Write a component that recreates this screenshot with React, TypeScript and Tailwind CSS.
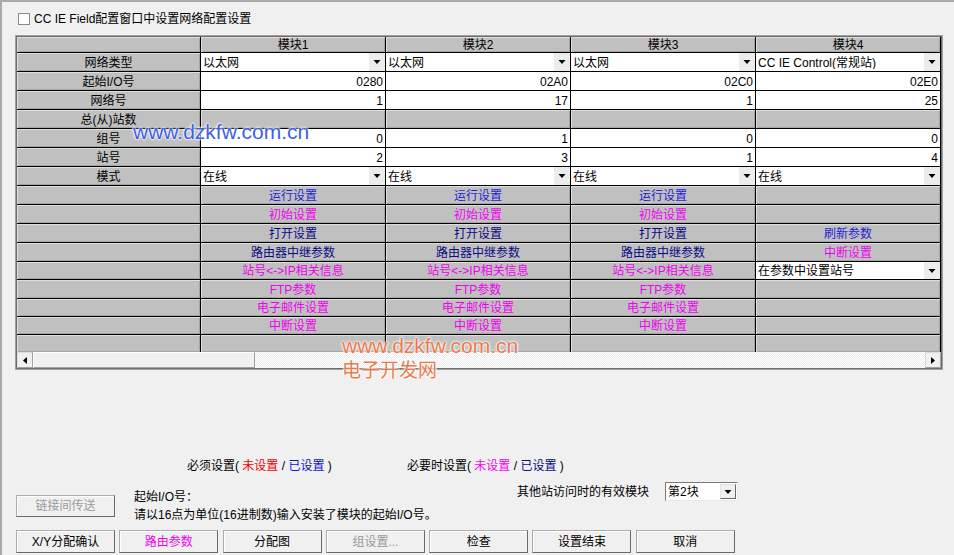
import React from 'react'

type Cell =
  | { t: 'gray'; text?: string; color?: string }
  | { t: 'num'; text: string }
  | { t: 'combo'; text: string }

type Row = { label: string; h: string; cells: Cell[]; last?: boolean }

const BLUE = 'text-[#1e1ed6]'
const NAVY = 'text-[#0a0a82]'
const PINK = 'text-[#f000f0]'

const g = (text?: string, color?: string): Cell => ({ t: 'gray', text, color })
const n = (text: string): Cell => ({ t: 'num', text })
const c = (text: string): Cell => ({ t: 'combo', text })

const rows: Row[] = [
  { label: '网络类型', h: 'h-[19px]', cells: [c('以太网'), c('以太网'), c('以太网'), c('CC IE Control(常规站)')] },
  { label: '起始I/O号', h: 'h-[19px]', cells: [n('0280'), n('02A0'), n('02C0'), n('02E0')] },
  { label: '网络号', h: 'h-[19px]', cells: [n('1'), n('17'), n('1'), n('25')] },
  { label: '总(从)站数', h: 'h-[19px]', cells: [g(), g(), g(), g()] },
  { label: '组号', h: 'h-[19px]', cells: [n('0'), n('1'), n('0'), n('0')] },
  { label: '站号', h: 'h-[19px]', cells: [n('2'), n('3'), n('1'), n('4')] },
  { label: '模式', h: 'h-[19px]', cells: [c('在线'), c('在线'), c('在线'), c('在线')] },
  { label: '', h: 'h-[19px]', cells: [g('运行设置', BLUE), g('运行设置', BLUE), g('运行设置', BLUE), g()] },
  { label: '', h: 'h-[19px]', cells: [g('初始设置', PINK), g('初始设置', PINK), g('初始设置', PINK), g()] },
  { label: '', h: 'h-[19px]', cells: [g('打开设置', NAVY), g('打开设置', NAVY), g('打开设置', NAVY), g('刷新参数', BLUE)] },
  { label: '', h: 'h-[19px]', cells: [g('路由器中继参数', NAVY), g('路由器中继参数', NAVY), g('路由器中继参数', NAVY), g('中断设置', PINK)] },
  { label: '', h: 'h-[18px]', cells: [g('站号<->IP相关信息', PINK), g('站号<->IP相关信息', PINK), g('站号<->IP相关信息', PINK), c('在参数中设置站号')] },
  { label: '', h: 'h-[19px]', cells: [g('FTP参数', PINK), g('FTP参数', PINK), g('FTP参数', PINK), g()] },
  { label: '', h: 'h-[18px]', cells: [g('电子邮件设置', PINK), g('电子邮件设置', PINK), g('电子邮件设置', PINK), g()] },
  { label: '', h: 'h-[18px]', cells: [g('中断设置', PINK), g('中断设置', PINK), g('中断设置', PINK), g()] },
  { label: '', h: 'h-[17px]', cells: [g(), g(), g(), g()], last: true },
]

const grayCell = 'bg-[#c0c0c0] shadow-[inset_1px_1px_0_#dedede,inset_-1px_-1px_0_#a4a4a4]'

function Arrow() {
  return (
    <svg width="8" height="4" viewBox="0 0 8 4">
      <path d="M0.5 0h7L4 4z" fill="#000" />
    </svg>
  )
}

function DataCell({ cell }: { cell: Cell }) {
  if (cell.t === 'num') {
    return <div className="h-full flex items-center justify-end pr-[2px] pt-px bg-white">{cell.text}</div>
  }
  if (cell.t === 'combo') {
    return (
      <div className="h-full flex items-center bg-white">
        <span className="flex-1 pl-[2px] pt-px truncate">{cell.text}</span>
        <span className="w-[16px] h-full flex items-center justify-center bg-[#ececec]">
          <Arrow />
        </span>
      </div>
    )
  }
  return (
    <div className={`h-full flex items-center justify-center pt-px ${grayCell} ${cell.color ?? ''}`}>
      {cell.text}
    </div>
  )
}

function Btn({ label, className = '' }: { label: string; className?: string }) {
  return (
    <div
      className={`w-[99px] h-[23px] flex items-center justify-center bg-[#f0f0f0] border border-[#adadad] border-r-[#6a6a6a] border-b-[#6a6a6a] shadow-[inset_1px_1px_0_#ffffff] ${className}`}
    >
      {label}
    </div>
  )
}

export default function App() {
  return (
    <div className="relative w-[954px] h-[555px] overflow-hidden bg-[#f0f0f0] border-t-2 border-l-2 border-[#a9a9a9] text-[12px] leading-none text-black font-['Liberation_Sans','Noto_Sans_CJK_SC',sans-serif]">
      {/* checkbox */}
      <div className="flex items-center h-[14px] mt-[10px] ml-[16px]">
        <span className="w-[12px] h-[12px] bg-white border border-[#8a8a8a]" />
        <span className="ml-[4px]">CC IE Field配置窗口中设置网络配置设置</span>
      </div>

      {/* table */}
      <div className="mt-[9px] ml-[13px] w-[928px] border border-[#a0a0a0]">
        <div className="border border-[#6e6e6e]">
          <div className="flex h-[16px] border-b border-black">
            <div className={`w-[184px] h-full border-r border-black ${grayCell}`} />
            {['模块1', '模块2', '模块3', '模块4'].map((m) => (
              <div key={m} className={`w-[185px] h-full border-r border-black flex items-center justify-center ${grayCell}`}>
                {m}
              </div>
            ))}
          </div>
          {rows.map((r, i) => (
            <div key={i} className={`flex ${r.h} ${r.last ? '' : 'border-b border-black'}`}>
              <div className={`w-[184px] h-full border-r border-black flex items-center justify-center pt-px ${grayCell}`}>
                {r.label}
              </div>
              {r.cells.map((cell, j) => (
                <div key={j} className="w-[185px] h-full border-r border-black">
                  <DataCell cell={cell} />
                </div>
              ))}
            </div>
          ))}
          {/* horizontal scrollbar */}
          <div className="flex h-[16px]">
            <div className="w-[16px] h-full flex items-center justify-center bg-[#f0f0f0] border border-[#dcdcdc] border-r-[#a0a0a0] border-b-[#a0a0a0]">
              <svg width="4" height="7" viewBox="0 0 4 7">
                <path d="M4 0v7L0 3.5z" fill="#000" />
              </svg>
            </div>
            <div className="w-[222px] h-full bg-[#f0f0f0] border border-white border-r-[#a0a0a0] border-b-[#a0a0a0]" />
            <div className="flex-1 h-full bg-[repeating-conic-gradient(#ffffff_0_25%,#ececec_0_50%)] bg-[length:2px_2px]" />
            <div className="w-[16px] h-full flex items-center justify-center bg-[#f0f0f0] border border-[#dcdcdc] border-r-[#a0a0a0] border-b-[#a0a0a0]">
              <svg width="4" height="7" viewBox="0 0 4 7">
                <path d="M0 0v7L4 3.5z" fill="#000" />
              </svg>
            </div>
          </div>
        </div>
      </div>

      {/* legend */}
      <div className="flex h-[14px] mt-[89px] items-center whitespace-nowrap">
        <div className="ml-[185px] w-[220px]">
          必须设置( <span className="text-[#f00000]">未设置</span> / <span className="text-[#1010c8]">已设置</span> )
        </div>
        <div>
          必要时设置( <span className="text-[#f000f0]">未设置</span> / <span className="text-[#0a0a82]">已设置</span> )
        </div>
      </div>

      {/* info row */}
      <div className="flex h-[40px] mt-[9px] items-start whitespace-nowrap">
        <div className="ml-[14px] mt-[13px]">
          <div className="w-[99px] h-[22px] flex items-center justify-center bg-[#f0f0f0] border border-[#adadad] border-r-[#6a6a6a] border-b-[#6a6a6a] shadow-[inset_1px_1px_0_#ffffff] text-[#9a9a9a]">
            链接间传送
          </div>
        </div>
        <div className="ml-[19px] w-[383px] flex flex-col">
          <div className="mt-[8px] h-[14px] flex items-center">起始I/O号：</div>
          <div className="mt-[4px] h-[14px] flex items-center">请以16点为单位(16进制数)输入安装了模块的起始I/O号。</div>
        </div>
        <div className="flex items-start">
          <div className="mt-[3px] h-[14px] w-[148px] flex items-center">其他站访问时的有效模块</div>
          <div className="w-[73px] h-[19px] flex items-center bg-white border border-[#7a7a7a] border-r-[#e8e8e8] border-b-[#e8e8e8]">
            <span className="flex-1 pl-[2px] pt-px">第2块</span>
            <span className="w-[16px] h-[15px] mr-[1px] flex items-center justify-center bg-[#f0f0f0] border border-[#e0e0e0] border-r-[#6a6a6a] border-b-[#6a6a6a]">
              <Arrow />
            </span>
          </div>
        </div>
      </div>

      {/* buttons */}
      <div className="flex gap-[4.3px] mt-[8px] ml-[14px]">
        <Btn label="X/Y分配确认" />
        <Btn label="路由参数" className="text-[#f000f0]" />
        <Btn label="分配图" />
        <Btn label="组设置..." className="text-[#9a9a9a]" />
        <Btn label="检查" />
        <Btn label="设置结束" />
        <Btn label="取消" />
      </div>

      {/* watermarks */}
      <div className="absolute left-[131px] top-[119px] text-[21px] leading-none text-[#3f5fe4] font-['Liberation_Sans',sans-serif] [text-shadow:0_0_2px_#fff,0_0_2px_#fff,0_0_3px_#fff]">
        www.dzkfw.com.cn
      </div>
      <div className="absolute left-[340px] top-[333px] text-[21px] leading-none text-[#ea7a4c] font-['Liberation_Sans',sans-serif] [text-shadow:0_0_2px_#fff,0_0_2px_#fff,0_0_3px_#fff]">
        www.dzkfw.com.cn
      </div>
      <div className="absolute left-[340px] top-[357px] text-[19px] leading-none text-[#ea7a4c] font-['Noto_Sans_CJK_SC',sans-serif] [text-shadow:0_0_2px_#fff,0_0_2px_#fff,0_0_3px_#fff]">
        电子开发网
      </div>
    </div>
  )
}
